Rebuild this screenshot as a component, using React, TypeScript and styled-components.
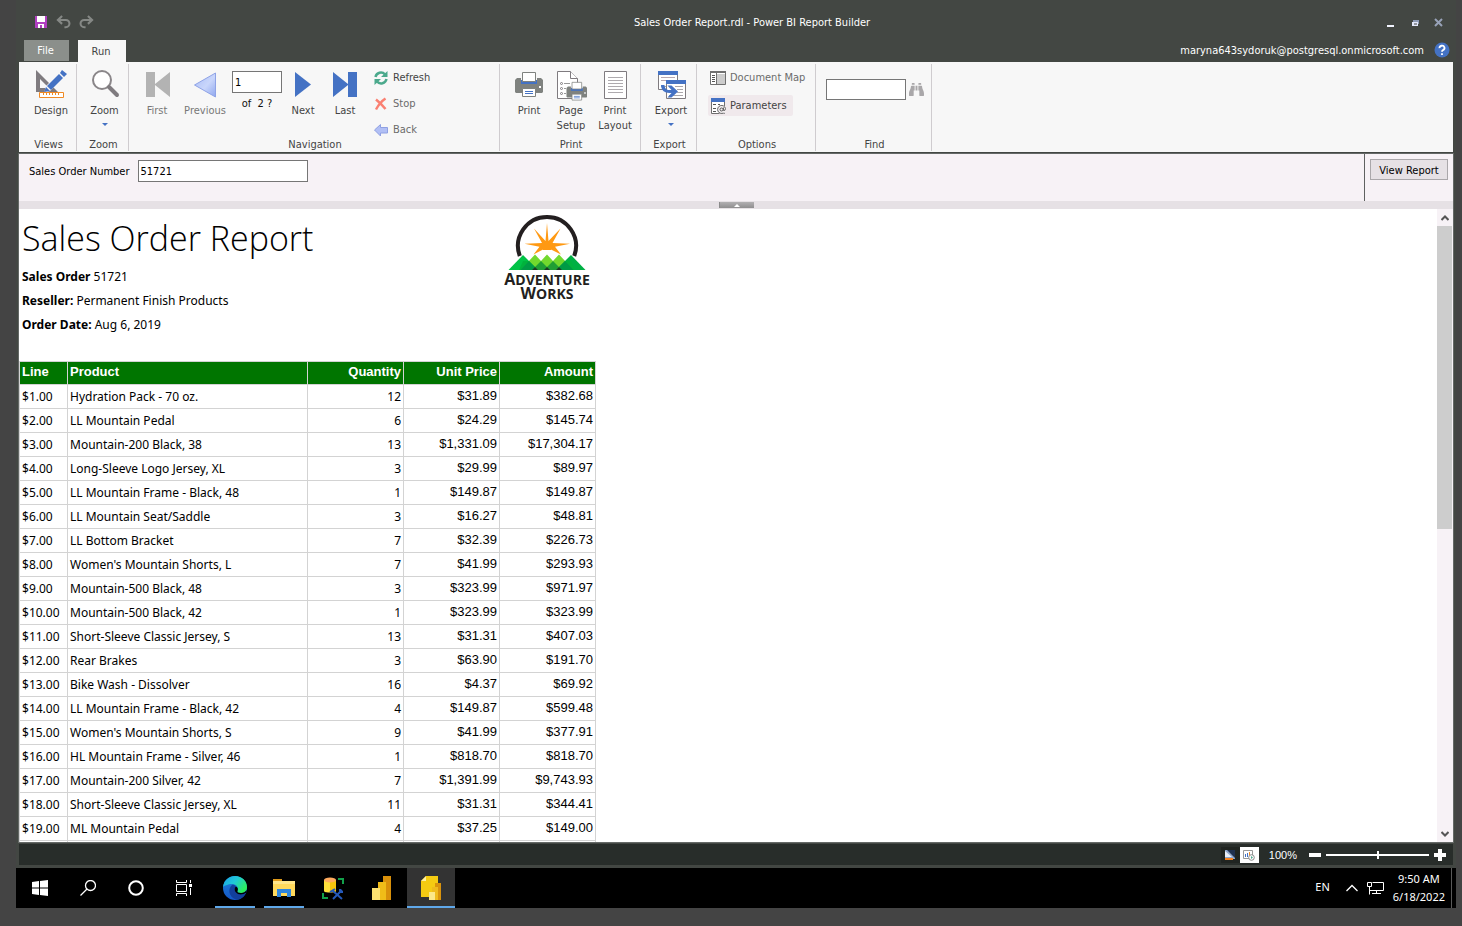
import React from 'react';
import styled, { createGlobalStyle, css } from 'styled-components';
import { FaBinoculars } from 'react-icons/fa';

const uiFont = '"DejaVu Sans Condensed", "Noto Sans", sans-serif';
const reportFont = '"Noto Sans", "Open Sans", sans-serif';

const GlobalStyle = createGlobalStyle`
  *, *::before, *::after { box-sizing: border-box; }
  body { margin: 0; background: #444444; font-family: ${uiFont}; font-size: 11px; }
  button, input { font: inherit; color: inherit; }
  button { border: 0; padding: 0; background: none; cursor: pointer; }
  svg { display: block; flex: none; }
`;

const Desktop = styled.div`
  display: flex;
  flex-direction: column;
  height: 100vh;
  padding: 0 6px 18px 16px;
`;

const AppWindow = styled.div`
  flex: 1;
  min-height: 0;
  display: flex;
  flex-direction: column;
  background: #434743;
  padding: 0 2px 3px;
`;

const TitleBar = styled.header`
  display: grid;
  grid-template-columns: 1fr auto 1fr;
  align-items: center;
  height: 40px;
  padding: 4px 10px 0 16px;
  color: #ffffff;
`;

const QuickAccess = styled.div`
  display: flex;
  gap: 8px;
`;

const AppTitle = styled.h1`
  margin: 0 0 0 26px;
  font-size: 11px;
  font-weight: 400;
`;

const WindowControls = styled.div`
  display: flex;
  justify-content: flex-end;
  gap: 14px;
`;

const TabStrip = styled.nav`
  display: flex;
  height: 22px;
  padding: 0 4px 0 6px;
`;

const Tab = styled.button<{ $active?: boolean }>`
  width: ${p => (p.$active ? 48 : 45)}px;
  height: ${p => (p.$active ? 22 : 21)}px;
  margin-right: 9px;
  padding-right: 2px;
  background: ${p => (p.$active ? '#f7f7f7' : '#8b8f8b')};
  color: ${p => (p.$active ? '#444444' : '#ffffff')};
`;

const Account = styled.div`
  display: flex;
  align-items: center;
  gap: 10px;
  height: 20px;
  margin-left: auto;
  color: #ffffff;
`;

const Ribbon = styled.div`
  display: flex;
  height: 90px;
  margin: 0 1px;
  padding: 2px 0 1px;
  background: #f7f7f7;
  color: #444444;
`;

const Group = styled.section<{ $width: number }>`
  display: flex;
  flex-direction: column;
  width: ${p => p.$width}px;
  border-right: 1px solid #cfcccf;
`;

const GroupBody = styled.div<{ $indent: number }>`
  flex: 1;
  min-height: 0;
  display: flex;
  align-items: flex-start;
  padding: 3px 0 0 ${p => p.$indent}px;
`;

const GroupLabel = styled.h2`
  margin: 0;
  padding-left: 2px;
  height: 14px;
  line-height: 16px;
  font-size: 11px;
  font-weight: 400;
  text-align: center;
`;

const BigButton = styled.button<{ $width?: number; $muted?: boolean }>`
  display: flex;
  flex-direction: column;
  align-items: center;
  width: ${p => p.$width ?? 42}px;
  padding-top: 1px;
  line-height: 15px;
  color: ${p => (p.$muted ? '#777777' : '#444444')};
  > svg { margin-bottom: 2px; }
  > svg + svg { margin: 5px 0 0; }
  > br + svg { margin: 0; }
`;

const PageBox = styled.div`
  width: 50px;
  padding-top: 4px;
  color: #111111;
  text-align: center;
`;

const textBox = css`
  display: block;
  background: #ffffff;
  border: 1px solid #767676;
  border-radius: 0;
  padding: 0 2px;
  color: #000000;
`;

const PageInput = styled.input`
  ${textBox}
  width: 50px;
  height: 22px;
  margin-bottom: 4px;
`;

const FindInput = styled.input`
  ${textBox}
  width: 80px;
  height: 21px;
`;

const FindRow = styled.div`
  display: flex;
  align-items: center;
  gap: 3px;
  padding-top: 12px;
`;

const CommandList = styled.div<{ $gap: number; $indent?: number }>`
  display: flex;
  flex-direction: column;
  align-items: flex-start;
  gap: ${p => p.$gap}px;
  padding-left: ${p => p.$indent ?? 0}px;
`;

const SmallButton = styled.button<{ $muted?: boolean; $pressed?: boolean }>`
  display: flex;
  align-items: center;
  gap: 4px;
  height: 21px;
  padding: 0 6px 0 2px;
  border-radius: 2px;
  background: ${p => (p.$pressed ? '#f0e9ec' : 'transparent')};
  color: ${p => (p.$muted ? '#6b6b6b' : '#444444')};
`;

const Workspace = styled.main`
  flex: 1;
  min-height: 0;
  display: flex;
  flex-direction: column;
  margin-top: 1px;
  border: 1px solid #656967;
  background: #ffffff;
`;

const ParameterBar = styled.form`
  display: flex;
  height: 47px;
  background: #f7f2f6;
  color: #000000;
`;

const ParameterField = styled.label`
  flex: 1;
  display: flex;
  align-items: center;
  gap: 8px;
  height: 34px;
  padding-left: 10px;
`;

const ParameterInput = styled.input`
  ${textBox}
  width: 170px;
  height: 22px;
`;

const SubmitArea = styled.div`
  border-left: 1px solid #5f6160;
  padding: 5px;
`;

const ViewReportButton = styled.button`
  width: 78px;
  height: 21px;
  padding-top: 1px;
  border: 1px solid #aaa7aa;
  background: #e6e1e5;
`;

const Splitter = styled.div`
  display: flex;
  justify-content: center;
  height: 8px;
  padding-top: 1px;
  background: #e6e1e5;
`;

const SplitterHandle = styled.button`
  display: flex;
  justify-content: center;
  align-items: center;
  width: 35px;
  height: 6px;
  background: linear-gradient(#b2b0b2, #8f8e8f);
  border-left: 1px solid #8b8b8b;
`;

const Viewer = styled.div`
  flex: 1;
  min-height: 0;
  display: flex;
`;

const Report = styled.article`
  flex: 1;
  overflow: hidden;
  font-family: ${reportFont};
  font-size: 12px;
  color: #000000;
`;

const ReportHeader = styled.div`
  display: grid;
  grid-template-columns: 482px 88px;
  height: 152px;
  padding: 5px 0 0 3px;
`;

const ReportTitle = styled.h2`
  margin: 0;
  height: 51px;
  line-height: 49px;
  font-family: "Open Sans", "Noto Sans", sans-serif;
  font-size: 34px;
  font-weight: 300;
  white-space: nowrap;
`;

const Fact = styled.p`
  margin: 0;
  line-height: 24px;
`;

const Lines = styled.table`
  table-layout: fixed;
  width: 577px;
  border-collapse: collapse;
`;

const HeadCell = styled.th<{ $right?: boolean }>`
  height: 23px;
  padding: 0 2px 3px;
  border: 1px solid #d3d3d3;
  background: #007500;
  color: #ffffff;
  font: bold 13px/18px "Liberation Sans", Arial, sans-serif;
  text-align: ${p => (p.$right ? 'right' : 'left')};
`;

const Cell = styled.td<{ $right?: boolean; $money?: boolean }>`
  height: 24px;
  padding: ${p => (p.$money ? '0 2px 2px' : '0 2px')};
  border: 1px solid #d3d3d3;
  text-align: ${p => (p.$right ? 'right' : 'left')};
  white-space: nowrap;
  ${p => p.$money && css`font: 13px/18px "Liberation Sans", Arial, sans-serif;`}
`;

const ScrollTrack = styled.div`
  display: flex;
  flex-direction: column;
  width: 16px;
  background: #f7f2f6;
`;

const ScrollThumb = styled.div`
  height: 303px;
  margin-right: 1px;
  background: #cdcdcd;
`;

const ScrollArrow = styled.button`
  display: flex;
  align-items: center;
  justify-content: center;
  width: 16px;
  height: 17px;
`;

const Spacer = styled.div`
  flex: 1;
`;

const StatusBar = styled.footer`
  display: flex;
  align-items: center;
  justify-content: flex-end;
  height: 21px;
  margin: 1px 1px 0;
  padding-right: 7px;
  background: #282d2a;
  color: #ffffff;
`;

const ViewToggle = styled.button<{ $active?: boolean }>`
  display: flex;
  align-items: center;
  justify-content: center;
  width: 19px;
  height: 16px;
  background: ${p => (p.$active ? '#ffffff' : '#202421')};
`;

const ZoomValue = styled.output`
  margin: 0 12px 0 10px;
  font-family: "Liberation Sans", Arial, sans-serif;
  font-size: 11px;
`;

const ZoomSlider = styled.input`
  appearance: none;
  width: 103px;
  height: 8px;
  margin: 0 5px;
  background: linear-gradient(#ffffff, #ffffff) center / 100% 2px no-repeat;
  &::-webkit-slider-thumb {
    appearance: none;
    width: 2px;
    height: 8px;
    background: #ffffff;
  }
`;

const Taskbar = styled.nav`
  display: flex;
  height: 40px;
  background: #000000;
  color: #ffffff;
`;

const TaskButton = styled.button<{ $running?: boolean; $active?: boolean }>`
  display: flex;
  align-items: center;
  justify-content: center;
  width: 48px;
  height: 40px;
  background:
    linear-gradient(#5fa8ea, #5fa8ea) bottom / ${p => (p.$active ? 48 : p.$running ? 40 : 0)}px 2px no-repeat,
    ${p => (p.$active ? '#333333' : '#000000')};
`;

const TaskApps = styled.div`
  display: flex;
  gap: 1px;
  margin-left: 3px;
`;

const Tray = styled.div`
  display: flex;
  align-items: center;
  gap: 9px;
  margin-left: auto;
  font-family: "Noto Sans", sans-serif;
  font-size: 11px;
`;

const Language = styled.span`
  margin: 0 7px 3px 0;
`;

const Clock = styled.time`
  line-height: 18px;
  text-align: center;
`;

const ShowDesktop = styled.button`
  width: 5px;
  height: 40px;
  margin-left: -3px;
  border-left: 1px solid #5a5a5a;
`;

const Big = ({ children }: { children: React.ReactNode }) => (
  <svg width="32" height="33" viewBox="0 0 32 33" fill="none">{children}</svg>
);
const Small = ({ children }: { children: React.ReactNode }) => (
  <svg width="16" height="16" viewBox="0 0 16 16" fill="none">{children}</svg>
);

const BLUE = '#4472c4';
const GRAY = '#7f7b7f';

const DesignIcon = () => (
  <Big>
    <path fillRule="evenodd" d="M1 2v22h22zM5 11v9h9z" fill={GRAY} />
    <path d="M9 25l2-7L26 3l5 4-16 16z" fill="#f7f7f7" />
    <path d="M12 18L24 6l4 4-12 12z" fill={BLUE} />
    <path d="M25 5l2-3 5 4-3 3z" fill={BLUE} />
    <path d="M11 19l4 4-6 1z" fill={BLUE} />
    <path d="M4.500 24.500h24v5h-24z" fill="#fff" stroke="#f08a24" />
    <path d="M8.500 25v2M11.500 25v2M14.500 25v2M17.500 25v2M20.500 25v2M23.500 25v2" stroke="#f08a24" />
  </Big>
);
const ZoomIcon = () => (
  <Big>
    <circle cx="13" cy="12" r="9" fill="#fff" stroke="#8a8689" strokeWidth="2" />
    <path d="M20 19L28 27" stroke="#7f7b7f" strokeWidth="4" strokeLinecap="round" />
  </Big>
);
const FirstIcon = () => <Big><path d="M5 4h9v12L29 4v25L14 17v12H5z" fill="#b3b3b3" /></Big>;
const PreviousIcon = () => (
  <Big>
    <defs>
      <linearGradient id="prev" x1="0" y1="0" x2="1" y2="1">
        <stop offset="0" stopColor="#a9bcf6" /><stop offset="0.550" stopColor="#c9d6fb" /><stop offset="1" stopColor="#8ea6ee" />
      </linearGradient>
    </defs>
    <path d="M5.500 17l21-12v24z" fill="url(#prev)" stroke="#8fa3e6" />
  </Big>
);
const NextIcon = () => <Big><path d="M8 4l16 12.500L8 29z" fill={BLUE} /></Big>;
const LastIcon = () => <Big><path d="M4 4l15 12V4h9v25h-9V17L4 29z" fill={BLUE} /></Big>;

const PrinterShape = () => (
  <>
    <path d="M4 10h4v4h16v-4h4l2 2v12l-1 1H3l-1-1V12z" fill="#7f827f" />
    <path d="M8 12h16v4H8z" fill={BLUE} />
    <path d="M9.500 4.500h13v9h-13z" fill="#fff" stroke="#7f827f" />
    <path d="M9.500 20.500h13v8h-13z" fill="#fff" stroke="#7f827f" />
    <path d="M12 23.500h8M12 25.500h8" stroke={BLUE} />
    <path d="M26 18h2v2h-2z" fill="#fff" />
  </>
);
const PrintIcon = () => <Big><PrinterShape /></Big>;
const PageSetupIcon = () => (
  <Big>
    <path d="M2.500 3.500h13l7 7v20h-20z" fill="#fff" stroke={GRAY} />
    <path d="M15.500 3.500v7h7" fill="#fff" stroke={GRAY} />
    <circle cx="6.500" cy="15.500" r="1" stroke={GRAY} /><circle cx="6.500" cy="20.500" r="1" stroke={GRAY} /><circle cx="6.500" cy="25.500" r="1" stroke={GRAY} />
    <path d="M9 15.500h6M9 20.500h2M9 25.500h2" stroke="#999" />
    <g transform="translate(10 11) scale(0.740)"><PrinterShape /></g>
  </Big>
);
const PrintLayoutIcon = () => (
  <Big>
    <path d="M5.500 3.500h22v27h-22z" fill="#fff" stroke={GRAY} />
    <path d="M9 9.500h15M9 12.500h15M9 15.500h15M9 18.500h15M9 21.500h15M9 24.500h15" stroke="#aeaaae" />
  </Big>
);
const WindowShape = () => (
  <>
    <path d="M.5.5h19v18H.5z" fill="#fff" stroke={GRAY} />
    <path d="M0 0h20v4H0z" fill={BLUE} />
    <path d="M9 6.500h8M11 9.500h6M11 12.500h6M3 15.500h14" stroke="#aaa6aa" />
  </>
);
const ExportIcon = () => (
  <Big>
    <g transform="translate(3 3)"><WindowShape /><path d="M3 6.500h14M3 9.500h14" stroke="#b9a9b0" /></g>
    <g transform="translate(11 12)"><WindowShape /></g>
    <path d="M6 17h3.500c0 3 2 5 5 5h2l-4-4.500h4l6.500 6-6.500 6h-4l4-4.500h-2c-5 0-8.500-3-8.500-8z" fill={BLUE} />
  </Big>
);
const RefreshIcon = () => (
  <Small>
    <path d="M2.500 7a5.500 5.500 0 0 1 9.500-2.500" stroke="#4ba98c" strokeWidth="2.500" />
    <path d="M14.500 1v6H8z" fill="#4ba98c" />
    <path d="M13.500 9A5.500 5.500 0 0 1 4 11.500" stroke="#4ba98c" strokeWidth="2.500" />
    <path d="M1.500 15V9H8z" fill="#4ba98c" />
  </Small>
);
const StopIcon = () => (
  <Small>
    <path d="M3 3.500q5 4 9.500 9.500M12.500 2.500Q7 6 3 13.500" stroke="#fa8072" strokeWidth="2.500" />
  </Small>
);
const BackIcon = () => (
  <Small>
    <path d="M1.500 8L7.500 2.500v3h7v5.500h-7v3z" fill="#b1bff5" stroke="#8fa0e2" />
  </Small>
);
const DocumentMapIcon = () => (
  <Small>
    <path d="M.5 1.500h15v13H.5z" fill="#fff" stroke="#6f6f6f" />
    <path d="M0 1h16v2H0z" fill="#6f6f6f" />
    <path d="M7 4h8v10H7z" fill="#cccccc" />
    <path d="M6.500 2v12" stroke="#6f6f6f" />
    <path d="M2 5.500h3M2 7.500h3M2 9.500h3M2 11.500h3" stroke="#555" />
  </Small>
);
const ParametersIcon = () => (
  <Small>
    <path d="M1.500.5h13v15h-13z" fill="#fff" stroke="#6f6f6f" />
    <path d="M1 0h14v4H1z" fill={BLUE} />
    <path d="M3 6.500h3M3 10.500h3M3 13.500h3M8 6.500h2" stroke="#555" />
    <circle cx="11.500" cy="11.500" r="4.500" fill="#f4f0f2" />
    <circle cx="11.500" cy="11.500" r="1.500" stroke="#555" />
    <path d="M13.500 9.500v3q2 .5 2-2a4 4 0 1 0-2 4.500" stroke="#666" />
  </Small>
);
const Caret = () => <svg width="6" height="3" viewBox="0 0 6 3"><path d="M0 0h6L3 3z" fill={BLUE} /></svg>;
const SaveIcon = () => (
  <svg width="14" height="14" viewBox="0 0 14 14"><path d="M1 1h12v12H1z" fill="#b03fc0" /><path d="M3 1h8v6H3zM4 9h6v4H8v-3H6v3H4z" fill="#fff" /></svg>
);
const UndoIcon = ({ flip }: { flip?: boolean }) => (
  <svg width="15" height="14" viewBox="0 0 16 14" fill="none" stroke="#858885" strokeWidth="2.200">
    <g transform={flip ? 'translate(16 0) scale(-1 1)' : undefined}>
      <path d="M6.500.500L2 4.800 6.500 9" /><path d="M2 4.800h8.500a3.800 3.800 0 0 1 0 7.700H9" />
    </g>
  </svg>
);
const HelpIcon = () => (
  <svg width="16" height="16" viewBox="0 0 16 16"><circle cx="8" cy="8" r="7.500" fill={BLUE} /><path d="M5.500 6.200a2.500 2.300 0 1 1 3.500 1.900q-1 .5-1 1.700M8 11.300v1.700" fill="none" stroke="#fff" strokeWidth="1.800" /></svg>
);

const Logo = () => (
  <svg width="88" height="89" viewBox="0 -1 88 89" role="img" aria-label="Adventure Works">
    <path d="M15.800 41a29 29 0 1 1 54.400 0" fill="none" stroke="#231f20" strokeWidth="4" />
    <g fill="#ff9912">
      <path d="M43 8l1.500 18 12-12.500-8 14.500 17.500.7-15 3 6 7.800-10-5h-8l-9.500 5 6-7.800-15-3 17.500-.7-8-14.500L41.500 26z" />
      <path d="M39 35l-2-4 2-5h8l2 5-2 4z" />
    </g>
    <path d="M4.500 55L19 40l15 15z" fill="#00c246" />
    <path d="M81.500 55L67 40 52 55z" fill="#00b044" />
    <path d="M16.500 55L31 39.500l6 6.500 6-6.500 6 6.500 6-6.500L69.500 55z" fill="#72d92e" />
    <path d="M25 46l9 9H15l4-9zM61 46l-9 9h19l-4-9z" fill="#00b33c" />
    <path d="M37 46l6 6 6-6 9 9H28z" fill="#1f9e34" />
    <path d="M25 46l6 6-3 3H16.500zM61 46l-6 6 3 3h11.500z" fill="#009a45" />
    <path d="M31 52l3 3h-6zM43 52l3 3h-6zM55 52l3 3h-6z" fill="#1d3a25" />
    <g fill="#231f20" fontFamily="Open Sans, Noto Sans, sans-serif" fontWeight="700" textAnchor="middle">
      <text x="43" y="70" fontSize="16">A<tspan fontSize="14">DVENTURE</tspan></text>
      <text x="43" y="84" fontSize="16">W<tspan fontSize="14">ORKS</tspan></text>
    </g>
  </svg>
);

const rows: [string, number, string, string][] = [
  ['Hydration Pack - 70 oz.', 12, '$31.89', '$382.68'],
  ['LL Mountain Pedal', 6, '$24.29', '$145.74'],
  ['Mountain-200 Black, 38', 13, '$1,331.09', '$17,304.17'],
  ['Long-Sleeve Logo Jersey, XL', 3, '$29.99', '$89.97'],
  ['LL Mountain Frame - Black, 48', 1, '$149.87', '$149.87'],
  ['LL Mountain Seat/Saddle', 3, '$16.27', '$48.81'],
  ['LL Bottom Bracket', 7, '$32.39', '$226.73'],
  ["Women's Mountain Shorts, L", 7, '$41.99', '$293.93'],
  ['Mountain-500 Black, 48', 3, '$323.99', '$971.97'],
  ['Mountain-500 Black, 42', 1, '$323.99', '$323.99'],
  ['Short-Sleeve Classic Jersey, S', 13, '$31.31', '$407.03'],
  ['Rear Brakes', 3, '$63.90', '$191.70'],
  ['Bike Wash - Dissolver', 16, '$4.37', '$69.92'],
  ['LL Mountain Frame - Black, 42', 4, '$149.87', '$599.48'],
  ["Women's Mountain Shorts, S", 9, '$41.99', '$377.91'],
  ['HL Mountain Frame - Silver, 46', 1, '$818.70', '$818.70'],
  ['Mountain-200 Silver, 42', 7, '$1,391.99', '$9,743.93'],
  ['Short-Sleeve Classic Jersey, XL', 11, '$31.31', '$344.41'],
  ['ML Mountain Pedal', 4, '$37.25', '$149.00'],
];

const EdgeIcon = () => (
  <svg width="24" height="24" viewBox="0 0 24 24">
    <defs>
      <linearGradient id="edgeTop" x1="0" y1="0" x2="1" y2=".6"><stop offset="0" stopColor="#1ba0e8" /><stop offset=".5" stopColor="#20c8d8" /><stop offset="1" stopColor="#2df05a" /></linearGradient>
      <linearGradient id="edgeBody" x1="0" y1="0" x2="0" y2="1"><stop offset="0" stopColor="#1c80d8" /><stop offset="1" stopColor="#1557c8" /></linearGradient>
    </defs>
    <circle cx="12" cy="12" r="12" fill="url(#edgeBody)" />
    <path d="M0 11C1 4 6 0 12 0c7 0 12 5 12 11 0 4-3 6-6 6-3 0-4-1-3.500-2C16 12 14 8 9 8 5 8 1 10 0 11z" fill="url(#edgeTop)" />
    <path d="M9 9c-4 3-4 12 4 14.500C17 24 21 21 23 17c-3 2-8 2-10-.5-2-2-1.500-5 0-6C12 9 10 8.500 9 9z" fill="#123f9c" />
    <path d="M13 10.500c-1.500 1-2 4 0 6C15 19 20 19 23.500 16.500V14c-1 2-3 3-5.500 3-3 0-4-1-3.500-2 1-2 0-4-1.500-4.500z" fill="#000" />
  </svg>
);
const ExplorerIcon = () => (
  <svg width="24" height="24" viewBox="0 0 24 24">
    <path d="M1 3h9v3H1z" fill="#e09b1a" /><path d="M1 5h22v15H1z" fill="#ffd95c" /><path d="M1 5h22v3H1z" fill="#ffe68a" />
    <path d="M5 21v-8h14v8h-4v-4H9v4z" fill="#2e86de" />
  </svg>
);
const ToolsIcon = () => (
  <svg width="24" height="24" viewBox="0 0 24 24" fill="none">
    <path d="M3 4v11c0 2 12 2 12 0V4z" fill="#ffdf3a" /><path d="M9 4v12c4 0 6-1 6-1V4z" fill="#f7c40c" /><ellipse cx="9" cy="4" rx="6" ry="2.500" fill="#ffab5e" />
    <path d="M17 3h5v5M2 17v5h5" stroke="#12a04a" strokeWidth="2" />
    <path d="M12 23l9-9M21 23l-9-8M9 16l5-3M19 13v3h3" stroke="#2558b8" strokeWidth="2" />
  </svg>
);
const PowerBIIcon = () => (
  <svg width="24" height="24" viewBox="0 0 24 24">
    <path d="M13 0h8v24h-8z" fill="#d9900a" /><path d="M8 6h8v18H8z" fill="#f0bc18" /><path d="M2 12h8v12H2z" fill="#fbe070" />
  </svg>
);
const BuilderIcon = () => (
  <svg width="24" height="24" viewBox="0 0 24 24">
    <path d="M7 0h12v21H2V5z" fill="#f5cb12" /><path d="M2 5h5V0z" fill="#fff0a0" />
    <path d="M16 7h6v17h-6z" fill="#d9930c" /><path d="M13 11h6v13h-6z" fill="#efbb1c" /><path d="M10 16h6v8h-6z" fill="#fbe788" />
  </svg>
);

const App: React.FC = () => (
  <>
    <GlobalStyle />
    <Desktop>
      <AppWindow>
        <TitleBar>
          <QuickAccess>
            <button aria-label="Save"><SaveIcon /></button>
            <button aria-label="Undo"><UndoIcon /></button>
            <button aria-label="Redo"><UndoIcon flip /></button>
          </QuickAccess>
          <AppTitle>Sales Order Report.rdl - Power BI Report Builder</AppTitle>
          <WindowControls>
            <button aria-label="Minimize"><svg width="10" height="10" viewBox="0 0 10 10"><path d="M1 8h7v2H1z" fill="#f2f4ff" /></svg></button>
            <button aria-label="Restore"><svg width="10" height="10" viewBox="0 0 10 10"><path d="M3 3h6v4H3z" fill="#8e9bb5" /><path d="M2 5h6v4H2z" fill="#e3e8fa" /><path d="M4 7h3" stroke="#434743" /></svg></button>
            <button aria-label="Close"><svg width="10" height="10" viewBox="0 0 10 10"><path d="M1 2l7 7M8 2L1 9" stroke="#98a2b8" strokeWidth="2" /></svg></button>
          </WindowControls>
        </TitleBar>
        <TabStrip>
          <Tab>File</Tab>
          <Tab $active>Run</Tab>
          <Account>
            maryna643sydoruk@postgresql.onmicrosoft.com
            <button aria-label="Help"><HelpIcon /></button>
          </Account>
        </TabStrip>
        <Ribbon>
          <Group $width={58}>
            <GroupBody $indent={8}>
              <BigButton $width={48}><DesignIcon />Design</BigButton>
            </GroupBody>
            <GroupLabel>Views</GroupLabel>
          </Group>
          <Group $width={52}>
            <GroupBody $indent={4}>
              <BigButton $width={48}><ZoomIcon />Zoom<Caret /></BigButton>
            </GroupBody>
            <GroupLabel>Zoom</GroupLabel>
          </Group>
          <Group $width={371}>
            <GroupBody $indent={7}>
              <BigButton $muted><FirstIcon />First</BigButton>
              <BigButton $muted $width={54}><PreviousIcon />Previous</BigButton>
              <PageBox>
                <PageInput aria-label="Page" defaultValue="1" />
                of&nbsp; 2 ?
              </PageBox>
              <BigButton><NextIcon />Next</BigButton>
              <BigButton><LastIcon />Last</BigButton>
              <CommandList $gap={5} $indent={5}>
                <SmallButton><RefreshIcon />Refresh</SmallButton>
                <SmallButton $muted><StopIcon />Stop</SmallButton>
                <SmallButton $muted><BackIcon />Back</SmallButton>
              </CommandList>
            </GroupBody>
            <GroupLabel>Navigation</GroupLabel>
          </Group>
          <Group $width={141}>
            <GroupBody $indent={8}>
              <BigButton><PrintIcon />Print</BigButton>
              <BigButton><PageSetupIcon />Page<br />Setup</BigButton>
              <BigButton $width={46}><PrintLayoutIcon />Print<br />Layout</BigButton>
            </GroupBody>
            <GroupLabel>Print</GroupLabel>
          </Group>
          <Group $width={56}>
            <GroupBody $indent={6}>
              <BigButton $width={48}><ExportIcon />Export<Caret /></BigButton>
            </GroupBody>
            <GroupLabel>Export</GroupLabel>
          </Group>
          <Group $width={119}>
            <GroupBody $indent={11}>
              <CommandList $gap={7}>
                <SmallButton $muted><DocumentMapIcon />Document Map</SmallButton>
                <SmallButton $pressed><ParametersIcon />Parameters</SmallButton>
              </CommandList>
            </GroupBody>
            <GroupLabel>Options</GroupLabel>
          </Group>
          <Group $width={116}>
            <GroupBody $indent={10}>
              <FindRow>
                <FindInput aria-label="Find" />
                <button aria-label="Find next"><FaBinoculars size={15} color="#a9a7a9" /></button>
              </FindRow>
            </GroupBody>
            <GroupLabel>Find</GroupLabel>
          </Group>
        </Ribbon>
        <Workspace>
          <ParameterBar onSubmit={e => e.preventDefault()}>
            <ParameterField>
              Sales Order Number
              <ParameterInput defaultValue="51721" />
            </ParameterField>
            <SubmitArea><ViewReportButton>View Report</ViewReportButton></SubmitArea>
          </ParameterBar>
          <Splitter>
            <SplitterHandle aria-label="Hide parameters">
              <svg width="6" height="3" viewBox="0 0 6 3"><path d="M0 3h6L3 0z" fill="#fff" /></svg>
            </SplitterHandle>
          </Splitter>
          <Viewer>
            <Report>
              <ReportHeader>
                <div>
                  <ReportTitle>Sales Order Report</ReportTitle>
                  <Fact><b>Sales Order</b> 51721</Fact>
                  <Fact><b>Reseller:</b> Permanent Finish Products</Fact>
                  <Fact><b>Order Date:</b> Aug 6, 2019</Fact>
                </div>
                <Logo />
              </ReportHeader>
              <Lines>
                <colgroup>
                  <col width="48" /><col width="240" /><col width="96" /><col width="96" /><col width="96" />
                </colgroup>
                <thead>
                  <tr>
                    <HeadCell>Line</HeadCell>
                    <HeadCell>Product</HeadCell>
                    <HeadCell $right>Quantity</HeadCell>
                    <HeadCell $right>Unit Price</HeadCell>
                    <HeadCell $right>Amount</HeadCell>
                  </tr>
                </thead>
                <tbody>
                  {rows.map(([product, quantity, price, amount], i) => (
                    <tr key={product}>
                      <Cell>${i + 1}.00</Cell>
                      <Cell>{product}</Cell>
                      <Cell $right>{quantity}</Cell>
                      <Cell $right $money>{price}</Cell>
                      <Cell $right $money>{amount}</Cell>
                    </tr>
                  ))}
                  <tr><Cell /><Cell /><Cell /><Cell /><Cell /></tr>
                </tbody>
              </Lines>
            </Report>
            <ScrollTrack>
              <ScrollArrow aria-label="Scroll up"><svg width="8" height="6" viewBox="0 0 8 6"><path d="M.5 5L4 1.500 7.500 5" fill="none" stroke="#555" strokeWidth="2" /></svg></ScrollArrow>
              <ScrollThumb />
              <Spacer />
              <ScrollArrow aria-label="Scroll down"><svg width="8" height="6" viewBox="0 0 8 6"><path d="M.5 1L4 4.500 7.500 1" fill="none" stroke="#555" strokeWidth="2" /></svg></ScrollArrow>
            </ScrollTrack>
          </Viewer>
        </Workspace>
        <StatusBar>
          <ViewToggle aria-label="Design view">
            <svg width="12" height="12" viewBox="0 0 12 12"><path d="M1 1h10v9H1z" fill="#8fa6cc" /><path d="M3 1h8v8z" fill="#20304f" /><path d="M1 2v6h7z" fill="#e8eef8" /><path d="M1 9h8v2H1z" fill="#f58220" /></svg>
          </ViewToggle>
          <ViewToggle $active aria-label="Run view">
            <svg width="12" height="12" viewBox="0 0 12 12" fill="none"><path d="M.5 1.500h9v8h-9z" stroke="#999" /><path d="M2.500 8V5M4.500 8V4" stroke="#4472c4" /><path d="M6.500 6V3" stroke="#f08a24" /><circle cx="8.500" cy="8.500" r="2.800" fill="#fff" stroke="#888" /><path d="M8 7l2 1.500L8 10z" fill="#4ba98c" /></svg>
          </ViewToggle>
          <ZoomValue>100%</ZoomValue>
          <button aria-label="Zoom out"><svg width="12" height="12" viewBox="0 0 12 12"><path d="M0 4h12v4H0z" fill="#fff" /></svg></button>
          <ZoomSlider type="range" aria-label="Zoom" defaultValue={50} />
          <button aria-label="Zoom in"><svg width="12" height="12" viewBox="0 0 12 12"><path d="M4 0h4v4h4v4H8v4H4V8H0V4h4z" fill="#fff" /></svg></button>
        </StatusBar>
      </AppWindow>
      <Taskbar>
        <TaskButton aria-label="Start">
          <svg width="16" height="16" viewBox="0 0 16 16"><path d="M0 2l7-1v6.500H0zM8 1l8-1v7.500H8zM0 8.500h7V15l-7-1zM8 8.500h8V16l-8-1z" fill="#fff" /></svg>
        </TaskButton>
        <TaskButton aria-label="Search">
          <svg width="16" height="16" viewBox="0 0 16 16" fill="none" stroke="#fff" strokeWidth="1.300"><circle cx="10.500" cy="5.500" r="5" /><path d="M7 9L.5 15.500" /></svg>
        </TaskButton>
        <TaskButton aria-label="Cortana">
          <svg width="16" height="16" viewBox="0 0 16 16" fill="none" stroke="#fff" strokeWidth="2"><circle cx="8" cy="8" r="6.800" /></svg>
        </TaskButton>
        <TaskButton aria-label="Task view">
          <svg width="16" height="16" viewBox="0 0 16 16" fill="none" stroke="#fff"><path d="M.5 0v2.500h10V0M.5 16v-2.500h10V16M.5 4.500h10v7H.5zM14.500 0v3M14.500 8v7" /><path d="M13 4h3v3h-3z" fill="#fff" stroke="none" /></svg>
        </TaskButton>
        <TaskApps>
          <TaskButton $running aria-label="Microsoft Edge"><EdgeIcon /></TaskButton>
          <TaskButton $running aria-label="File Explorer"><ExplorerIcon /></TaskButton>
          <TaskButton aria-label="Data tools"><ToolsIcon /></TaskButton>
          <TaskButton aria-label="Power BI Desktop"><PowerBIIcon /></TaskButton>
          <TaskButton $running $active aria-label="Report Builder"><BuilderIcon /></TaskButton>
        </TaskApps>
        <Tray>
          <Language>EN</Language>
          <button aria-label="Show hidden icons"><svg width="12" height="8" viewBox="0 0 12 8"><path d="M.5 7L6 1.500 11.500 7" fill="none" stroke="#fff" strokeWidth="1.300" /></svg></button>
          <svg width="17" height="14" viewBox="0 0 17 14" fill="none" stroke="#fff"><path d="M5.500 1.500h11v8h-11M.5 1.500h4v4h-4zM2.500 6v7.500M2.500 9.500h4M9.500 10v3M5 12.500h9" /></svg>
          <Clock>9:50 AM<br />6/18/2022</Clock>
          <ShowDesktop aria-label="Show desktop" />
        </Tray>
      </Taskbar>
    </Desktop>
  </>
);

export default App;
